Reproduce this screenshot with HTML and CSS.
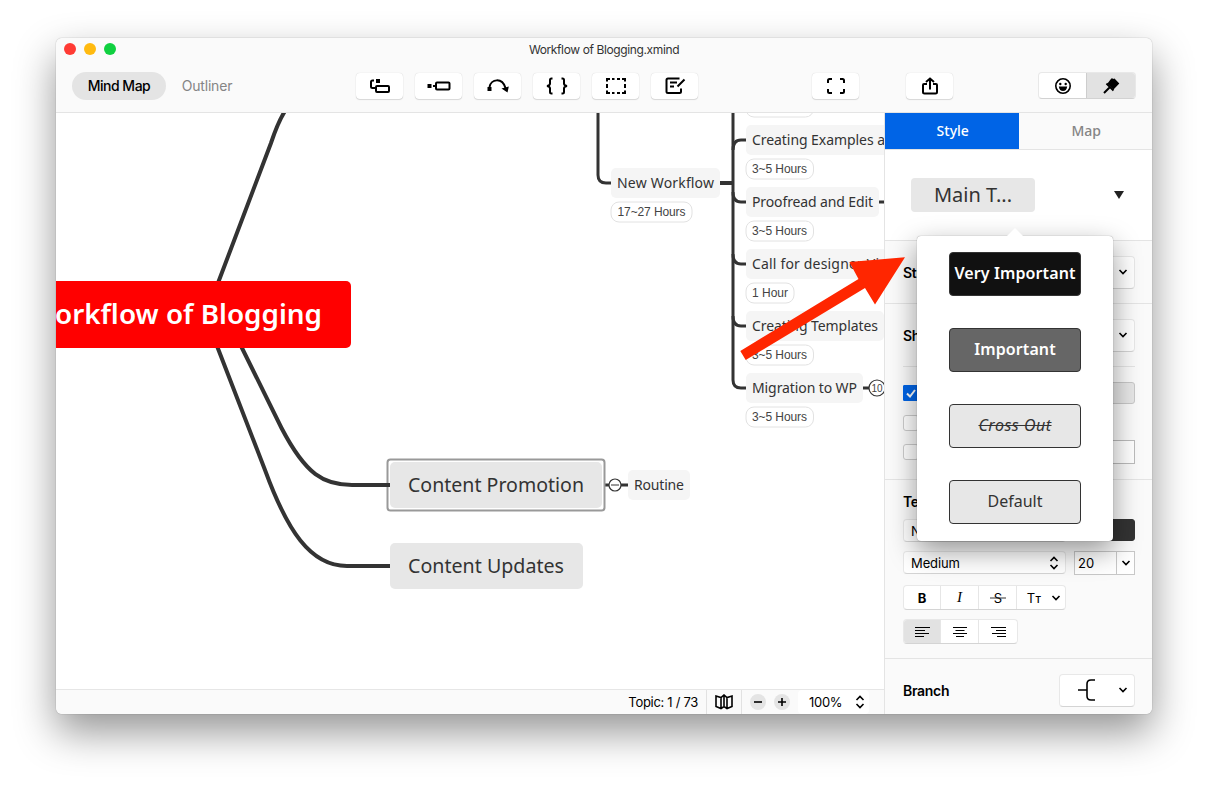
FILE: index.html
```html
<!DOCTYPE html>
<html lang="en">
<head>
    <meta charset="UTF-8">
    <meta name="viewport" content="width=device-width, initial-scale=1.0">
    <title>Workflow of Blogging.xmind</title>
    <link rel="stylesheet" href="styles.css">
</head>
<body>
    <div class="window">
        <header class="header">
            <div class="titlebar">
                <div class="lights">
                    <span class="light red"></span>
                    <span class="light yellow"></span>
                    <span class="light green"></span>
                </div>
                <span class="title">Workflow of Blogging.xmind</span>
            </div>
            <div class="toolbar">
                <div class="views">
                    <button class="view active">Mind Map</button>
                    <button class="view">Outliner</button>
                </div>
                <div class="tools">
                    <button class="tool"><svg width="22" height="18" viewBox="0 0 22 18"><rect x="7" y="2" width="4" height="4" fill="#000"/><path class="ln" d="M5 3.500H3.500Q2 3.500 2 5V9.500Q2 11 3.500 11H6"/><rect class="ln" x="7" y="9" width="13" height="6" rx="1"/></svg></button>
                    <button class="tool"><svg width="24" height="18" viewBox="0 0 24 18"><path d="M.5 7h4v4h-4zM6 8h3v2H6z"/><rect class="ln" x="9" y="5.500" width="13.500" height="7" rx="1"/></svg></button>
                    <button class="tool"><svg width="22" height="18" viewBox="0 0 22 18"><path d="M.5 10h4v4h-4zM14.500 11.500l7.300-2L20.500 15.500z"/><path class="ln" d="M2.500 10C4 2 15 0 18.500 11"/></svg></button>
                    <button class="tool"><svg width="22" height="18" viewBox="0 0 22 18"><path class="ln" d="M6.500 1.500H5.500Q4 1.500 4 3V6.500Q4 8.500 1 9Q4 9.500 4 11.500V15Q4 16.500 5.500 16.500H6.500M15.500 1.500H16.500Q18 1.500 18 3V6.500Q18 8.500 21 9Q18 9.500 18 11.500V15Q18 16.500 16.500 16.500H15.500"/></svg></button>
                    <button class="tool"><svg width="22" height="18" viewBox="0 0 22 18"><path class="ln" d="M2 4.500V2H5M17 2H20V4.500M20 13.500V16H17M5 16H2V13.500M7 2H9.500M12 2H15M7 16H9.500M12 16H15M2 7V11M20 7V11"/></svg></button>
                    <button class="tool"><svg width="22" height="18" viewBox="0 0 22 18"><path class="ln" d="M15.500 1.500H4Q2.500 1.500 2.500 3V14.500Q2.500 16 4 16H15.500Q17 16 17 14.500V11.500M6 5.500H13M6 9.500H10M20.500 2.500L13.500 9.500"/></svg></button>
                </div>
                <button class="tool zen"><svg width="20" height="18" viewBox="0 0 20 18"><path class="ln" d="M2 6V3.500Q2 2 3.500 2H6M14 2H16.500Q18 2 18 3.500V6M18 12V14.500Q18 16 16.500 16H14M6 16H3.500Q2 16 2 14.500V12"/></svg></button>
                <button class="tool share"><svg width="18" height="18" viewBox="0 0 18 18"><path class="ln" d="M6 7H3Q2 7 2 8V15Q2 16.500 3.500 16.500H14.500Q16 16.500 16 15V8Q16 7 15 7H12M9 12.500V2M5 5L9 1.500L13 5"/></svg></button>
                <div class="panels">
                    <button class="panel"><svg width="18" height="18" viewBox="0 0 18 18"><circle class="ln thin" cx="9" cy="9" r="7.200"/><circle cx="6.300" cy="7" r="1.200"/><circle cx="11.700" cy="7" r="1.200"/><path d="M4.800 9.500H13.200Q12.500 14 9 14Q5.500 14 4.800 9.500z"/></svg></button>
                    <button class="panel active"><svg width="18" height="18" viewBox="0 0 18 18"><path d="M8.500 2.500L10 1 11 2 12.500 1.500 17.300 6.500 11.500 12.500 5.500 6.500z"/><path class="ln" d="M4.500 6.500L11.500 13.500M8 10L2 16"/></svg></button>
                </div>
            </div>
        </header>

        <div class="content">
            <main class="workspace">
                <!-- mind map canvas -->
                <svg class="map" width="828" height="576" viewBox="56 113 828 576">
                    <g class="branch">
                        <path d="M218 283L271 143Q278 122 285 111"/>
                        <path d="M217 346L265 470C287 530 310 566 347 566H391"/>
                        <path d="M241 346L281.500 428C306 475 324 485 352 485H391"/>
                        <path d="M720 183H733"/>
                    </g>
                    <g class="twig">
                        <path d="M598 113V175Q598 183 606 183H612"/>
                        <path d="M733 113V380Q733 388 741 388H747"/>
                        <path d="M733 150Q733 140 741 140H747M733 192Q733 202 741 202H747M733 254Q733 264 741 264H747M733 316Q733 326 741 326H747"/>
                        <path d="M879 202H884M863 388H869M603 485H609M621 485H629"/>
                    </g>

                    <rect class="root" x="20" y="281" width="331" height="67" rx="5"/>
                    <text class="root-text" x="322" y="324" text-anchor="end" textLength="293" lengthAdjust="spacingAndGlyphs">Workflow of Blogging</text>

                    <rect class="selection" x="387.500" y="459.500" width="217" height="51" rx="3"/>
                    <path class="stub" d="M386 485H391"/>
                    <rect class="main" x="390" y="462" width="212" height="46" rx="5"/>
                    <text class="main-text" x="408" y="492" textLength="176" lengthAdjust="spacingAndGlyphs">Content Promotion</text>
                    <rect class="main" x="390" y="543" width="193" height="46" rx="5"/>
                    <text class="main-text" x="408" y="573" textLength="156" lengthAdjust="spacingAndGlyphs">Content Updates</text>

                    <circle class="fold" cx="615" cy="485" r="6"/>
                    <path class="minus" d="M611 485H619"/>

                    <g class="sub">
                        <rect x="628" y="470" width="62" height="30" rx="5"/>
                        <rect x="611" y="168" width="109" height="30" rx="5"/>
                        <rect x="746" y="125" width="150" height="30" rx="5"/>
                        <rect x="746" y="187" width="133" height="30" rx="5"/>
                        <rect x="746" y="249" width="150" height="30" rx="5"/>
                        <rect x="746" y="311" width="138" height="30" rx="5"/>
                        <rect x="746" y="373" width="117" height="30" rx="5"/>
                    </g>
                    <g class="sub-text">
                        <text x="634" y="490" textLength="50">Routine</text>
                        <text x="617" y="188" textLength="97">New Workflow</text>
                        <text x="752" y="145" textLength="133">Creating Examples a</text>
                        <text x="752" y="207" textLength="121">Proofread and Edit</text>
                        <text x="752" y="269" textLength="127">Call for designer Vi</text>
                        <text x="752" y="331" textLength="126">Creating Templates</text>
                        <text x="752" y="393" textLength="105">Migration to WP</text>
                    </g>

                    <g class="label">
                        <rect x="746" y="97.500" width="67.500" height="19.500" rx="8"/>
                        <rect x="611" y="202" width="81" height="20" rx="8"/>
                        <rect x="746" y="159" width="67.500" height="20" rx="8"/>
                        <rect x="746" y="221" width="67.500" height="20" rx="8"/>
                        <rect x="746" y="283" width="48" height="20" rx="8"/>
                        <rect x="746" y="345" width="67.500" height="20" rx="8"/>
                        <rect x="746" y="407" width="67.500" height="20" rx="8"/>
                    </g>
                    <g class="label-text">
                        <text x="617.500" y="216" textLength="68">17~27 Hours</text>
                        <text x="752" y="173" textLength="55">3~5 Hours</text>
                        <text x="752" y="235" textLength="55">3~5 Hours</text>
                        <text x="752" y="297" textLength="36">1 Hour</text>
                        <text x="752" y="359" textLength="55">3~5 Hours</text>
                        <text x="752" y="421" textLength="55">3~5 Hours</text>
                    </g>
                    <circle class="fold" cx="877" cy="388" r="8"/>
                    <text class="count" x="877" y="392" text-anchor="middle">10</text>
                </svg>

                <footer class="statusbar">
                    <span class="topic">Topic: 1 / 73</span>
                    <span class="overview"><svg width="18" height="16" viewBox="0 0 18 16"><path class="ln thin" d="M1 2L6 3.500 9 1 12 3.500 17 2V12.500L12 14.500 9 12.500 6 14.500 1 12.500zM6 3.500V14.500M9 1.500V12.500M12 3.500V14.500"/></svg></span>
                    <button class="zoom"><svg width="8" height="8" viewBox="0 0 8 8"><path class="ln thin" d="M0 4H8"/></svg></button>
                    <button class="zoom"><svg width="8" height="8" viewBox="0 0 8 8"><path class="ln thin" d="M0 4H8M4 0V8"/></svg></button>
                    <div class="percent">100% <svg width="10" height="14" viewBox="0 0 10 14"><path class="ln thin" d="M1.500 5L5 1.500 8.500 5M1.500 9L5 12.500 8.500 9"/></svg></div>
                </footer>
            </main>

            <aside class="sidebar">
                <div class="tabs">
                    <button class="tab active">Style</button>
                    <button class="tab">Map</button>
                </div>
                <section class="preset">
                    <div class="preset-name">Main T...</div>
                    <span class="triangle"></span>
                    <div class="popover">
                        <div class="option very">Very Important</div>
                        <div class="option important">Important</div>
                        <div class="option cross">Cross Out</div>
                        <div class="option">Default</div>
                    </div>
                </section>
                <section class="row structure">
                    <b>Structure</b>
                    <button class="picker"><svg width="10" height="6" viewBox="0 0 10 6"><path class="ln thin" d="M1.500 1L5 4.500 8.500 1"/></svg></button>
                </section>
                <section class="shape">
                    <div class="row shape-row">
                        <b>Shape</b>
                        <button class="picker"><svg width="10" height="6" viewBox="0 0 10 6"><path class="ln thin" d="M1.500 1L5 4.500 8.500 1"/></svg></button>
                    </div>
                    <div class="check-row">
                        <span class="check on"><svg width="10" height="9" viewBox="0 0 10 9"><path d="M1 4.500L4 7.500 9 1"/></svg></span>
                        <span class="swatch"></span>
                    </div>
                    <div class="check-row"><span class="check"></span></div>
                    <div class="check-row">
                        <span class="check"></span>
                        <span class="field"></span>
                    </div>
                </section>
                <section class="text">
                    <b>Text</b>
                    <div class="line">
                        <div class="select font">Nunito</div>
                        <span class="swatch dark"></span>
                    </div>
                    <div class="line">
                        <div class="select">Medium <svg width="10" height="14" viewBox="0 0 10 14"><path class="ln thin" d="M1.500 5L5 1.500 8.500 5M1.500 9L5 12.500 8.500 9"/></svg></div>
                        <div class="size"><span>20</span><i><svg width="10" height="6" viewBox="0 0 10 6"><path class="ln thin" d="M1.500 1L5 4.500 8.500 1"/></svg></i></div>
                    </div>
                    <div class="group">
                        <button class="bold">B</button>
                        <button class="italic">I</button>
                        <button class="strike"><svg width="16" height="14" viewBox="0 0 16 14"><text x="8" y="11.500" text-anchor="middle">S</text><path d="M0 7H16"/></svg></button>
                        <button class="case"><span>T<small>T</small></span><svg width="10" height="6" viewBox="0 0 10 6"><path class="ln thin" d="M1.500 1L5 4.500 8.500 1"/></svg></button>
                    </div>
                    <div class="group">
                        <button class="active"><svg width="15" height="12" viewBox="0 0 15 12"><path class="bar" d="M0 1.500H15M0 4.500H10M0 7.500H14M0 10.500H9"/></svg></button>
                        <button><svg width="14" height="12" viewBox="0 0 14 12"><path class="bar" d="M0 1.500H14M2.500 4.500H11.500M0 7.500H14M3 10.500H11"/></svg></button>
                        <button><svg width="15" height="12" viewBox="0 0 15 12"><path class="bar" d="M0 1.500H15M5 4.500H15M1 7.500H15M6 10.500H15"/></svg></button>
                    </div>
                </section>
                <section class="row branch-row">
                    <b>Branch</b>
                    <button class="picker"><svg width="18" height="22" viewBox="0 0 18 22"><path class="ln thin" d="M0 11H9M17 1H13Q9 1 9 5V17Q9 21 13 21H17"/></svg><svg width="10" height="6" viewBox="0 0 10 6"><path class="ln thin" d="M1.500 1L5 4.500 8.500 1"/></svg></button>
                </section>
            </aside>
        </div>
    </div>

    <!-- red pointer lying over the window -->
    <svg class="arrow" width="170" height="110" viewBox="738 254 170 110">
        <path d="M740.300 351L858.500 279 849.300 262 905 257.300 875 304.500 865 288 745.700 360z"/>
    </svg>
</body>
</html>
```
FILE: styles.css
```css
* {
    box-sizing: border-box;
}

body {
    margin: 0;
    height: 788px;
    padding: 38px 56px;
    background: #fff;
    font-family: Inter, "Liberation Sans", sans-serif;
    font-size: 13px;
    color: #000;
    overflow: hidden;
}

button {
    border: none;
    padding: 0;
    background: none;
    font: inherit;
    display: flex;
    align-items: center;
    justify-content: center;
}

.ln {
    fill: none;
    stroke: #000;
    stroke-width: 2;
}

.thin {
    stroke-width: 1.6;
}

/* window */
.window {
    width: 1096px;
    height: 676px;
    border-radius: 6px;
    overflow: hidden;
    background: #fff;
    box-shadow: 0 0 1px rgba(0, 0, 0, 0.5), 0 18px 40px rgba(0, 0, 0, 0.42);
}

.header {
    height: 75px;
    background: #fafafa;
    border-bottom: 1px solid #e4e4e4;
}

.titlebar {
    height: 23px;
    display: flex;
    align-items: center;
    padding-left: 8px;
}

.lights {
    display: flex;
    gap: 8px;
    width: 52px;
    padding-bottom: 1px;
}

.light {
    width: 12px;
    height: 12px;
    border-radius: 50%;
}

.red {
    background: #ff3b34;
}

.yellow {
    background: #ffba10;
}

.green {
    background: #10d040;
}

.title {
    flex: 1;
    padding-right: 60px;
    text-align: center;
    font-size: 12px;
    letter-spacing: -0.38px;
    color: #333;
}

.toolbar {
    height: 49px;
    display: flex;
    align-items: center;
    padding: 0 16px;
}

.views {
    display: flex;
    width: 284px;
}

.view {
    height: 28px;
    width: 94px;
    border-radius: 14px;
    font-size: 14px;
    letter-spacing: -0.2px;
    color: #858585;
}

.view.active {
    background: #e4e4e4;
    color: #000;
    font-weight: 500;
    letter-spacing: -0.5px;
}

.view:last-child {
    width: 82px;
}

.tools {
    display: flex;
    gap: 12px;
}

.tool {
    width: 47px;
    height: 26px;
    background: #fff;
    border-radius: 4px;
    box-shadow: 0 0 1px rgba(0, 0, 0, 0.2), 0 1px 1px rgba(0, 0, 0, 0.12);
}

.zen {
    margin-left: 114px;
}

.share {
    margin-left: 47px;
}

.panels {
    display: flex;
    margin-left: 85px;
    border-radius: 4px;
    overflow: hidden;
    background: #fff;
    border: 1px solid #e8e8e8;
    border-bottom-color: #d2d2d2;
}

.panel {
    width: 47px;
    height: 25px;
}

.panel.active {
    width: 49px;
    background: #e2e2e2;
    border-left: 1px solid #cdcdcd;
}

.content {
    display: flex;
    height: 601px;
}

/* map */
.workspace {
    width: 828px;
}

.map {
    display: block;
    font-family: "Noto Sans", sans-serif;
}

.branch path,
.twig path {
    fill: none;
    stroke: #333;
    stroke-width: 4;
}

.twig path {
    stroke-width: 3;
}

.root {
    fill: #f00;
}

.root-text {
    font-size: 27px;
    font-weight: 600;
    fill: #fff;
}

.main {
    fill: #e7e7e7;
}

.main-text {
    font-size: 20px;
    font-weight: 450;
    fill: #333;
}

.selection {
    fill: #fff;
    stroke: #999;
    stroke-width: 2;
}

.stub {
    stroke: #333;
    stroke-width: 4;
}

.fold {
    fill: #fff;
    stroke: #333;
    stroke-width: 1.2;
}

.minus {
    stroke: #333;
}

.sub {
    fill: #f5f5f5;
}

.sub-text {
    font-size: 14px;
    font-weight: 450;
    fill: #333;
}

.label {
    fill: #fff;
    stroke: #e2e2e2;
}

.label-text {
    font-family: "Liberation Sans", sans-serif;
    font-size: 12px;
    fill: #444;
}

.count {
    font-family: "Liberation Sans", sans-serif;
    font-size: 10px;
    fill: #444;
}

.statusbar {
    height: 25px;
    display: flex;
    align-items: center;
    justify-content: flex-end;
    padding-right: 15px;
    background: #fafafa;
    border-top: 1px solid #e6e6e6;
}

.topic {
    letter-spacing: -0.3px;
    padding-right: 8px;
}

.overview {
    display: flex;
    align-items: center;
    justify-content: center;
    width: 36px;
    height: 24px;
    border-left: 1px solid #e2e2e2;
    border-right: 1px solid #e2e2e2;
    margin-right: 8px;
}

.zoom {
    width: 16px;
    height: 16px;
    border-radius: 50%;
    background: #e4e4e4;
    margin-right: 8px;
}

.percent {
    width: 71px;
    height: 24px;
    display: flex;
    align-items: center;
    justify-content: space-between;
    padding: 0 4px 0 11px;
    background: #fff;
    border-radius: 4px;
    letter-spacing: -0.3px;
}

/* sidebar */
.sidebar {
    width: 268px;
    background: #fafafa;
    border-left: 1px solid #e4e4e4;
}

.tabs {
    display: flex;
    height: 37px;
    border-bottom: 1px solid #e4e4e4;
}

.tab {
    flex: 1;
    padding: 0 0 2px 2px;
    font-family: "Noto Sans", sans-serif;
    font-size: 14px;
    font-weight: 500;
    color: #858585;
}

.tab.active {
    background: #0064e6;
    color: #fff;
}

.preset {
    position: relative;
    height: 91px;
    display: flex;
    align-items: center;
    justify-content: space-between;
    padding: 0 28px 0 26px;
    background: #fff;
    border-bottom: 1px solid #e4e4e4;
}

.preset-name {
    width: 124px;
    height: 34px;
    line-height: 33px;
    text-align: center;
    border-radius: 4px;
    background: #e7e7e7;
    font-family: "Noto Sans", sans-serif;
    font-size: 20px;
    color: #333;
}

.triangle {
    border: 5px solid transparent;
    border-top: 8px solid #222;
    border-bottom: none;
}

.popover {
    position: absolute;
    left: 32px;
    top: 86px;
    width: 196px;
    height: 305px;
    display: flex;
    flex-direction: column;
    gap: 32px;
    padding: 16px 32px;
    border-radius: 4px;
    background: #fff;
    box-shadow: 0 0 1px rgba(0, 0, 0, 0.5), 0 10px 28px rgba(0, 0, 0, 0.4);
    font-family: "Noto Sans", sans-serif;
}

.popover::before {
    content: "";
    position: absolute;
    left: 90px;
    top: -8px;
    border: 8px solid transparent;
    border-top: none;
    border-bottom-color: #fff;
}

.option {
    height: 44px;
    line-height: 41px;
    text-align: center;
    border: 1px solid #333;
    border-radius: 4px;
    background: #e7e7e7;
    color: #333;
    font-size: 16px;
    white-space: nowrap;
}

.very,
.important {
    background: #111;
    color: #fff;
    font-weight: 600;
    letter-spacing: 0.1px;
}

.important {
    background: #666;
}

.cross {
    font-style: italic;
    text-decoration: line-through;
    letter-spacing: 0.5px;
}

b {
    font-weight: 600;
    font-size: 14px;
    letter-spacing: -0.3px;
}

.row {
    display: flex;
    align-items: center;
    justify-content: space-between;
    padding: 0 17px 0 18px;
}

.structure {
    height: 63px;
    border-bottom: 1px solid #e4e4e4;
}

.picker {
    width: 76px;
    height: 33px;
    justify-content: flex-end;
    gap: 22px;
    padding-right: 6px;
    background: #fff;
    border: 1px solid #e8e8e8;
    border-bottom-color: #d4d4d4;
    border-radius: 4px;
}

.shape {
    height: 176px;
    padding: 0 17px 0 18px;
    border-bottom: 1px solid #e4e4e4;
}

.shape-row {
    height: 63px;
    padding: 0;
    border-bottom: 1px solid #e4e4e4;
    margin-bottom: 11px;
}

.check-row {
    height: 30px;
    display: flex;
    align-items: center;
    justify-content: space-between;
}

.check-row:last-child {
    height: 28px;
}

.check {
    width: 16px;
    height: 16px;
    border: 1px solid #ccc;
    border-radius: 3px;
    background: #fff;
}

.check.on {
    display: flex;
    align-items: center;
    justify-content: center;
    background: #0064e6;
    border-color: #0064e6;
    border-radius: 1px;
}

.check path {
    fill: none;
    stroke: #fff;
    stroke-width: 2;
}

.swatch {
    width: 60px;
    height: 22px;
    border-radius: 3px;
    background: #e7e7e7;
    border: 1px solid #c8c8c8;
}

.field {
    width: 60px;
    height: 24px;
    background: #fff;
    border: 1px solid #bbb;
}

.dark {
    background: #333;
    border-color: #333;
}

.text {
    height: 179px;
    padding: 12px 17px 0 18px;
    border-bottom: 1px solid #e4e4e4;
}

.text b {
    display: block;
    height: 27px;
    line-height: 20px;
}

.line {
    display: flex;
    justify-content: space-between;
    height: 23px;
    margin-bottom: 9px;
}

.select {
    width: 163px;
    height: 23px;
    display: flex;
    align-items: center;
    justify-content: space-between;
    padding: 0 6px 0 7px;
    background: #fff;
    border: 1px solid #e8e8e8;
    border-bottom-color: #d4d4d4;
    border-radius: 4px;
    letter-spacing: -0.1px;
}

.size {
    width: 61px;
    height: 24px;
    display: flex;
    align-items: center;
    background: #fff;
    border: 1px solid #c8c8c8;
}

.size span {
    flex: 1;
    padding-left: 3px;
}

.size i {
    width: 18px;
    height: 22px;
    display: flex;
    align-items: center;
    justify-content: center;
    border-left: 1px solid #c8c8c8;
}

.group {
    display: flex;
    width: max-content;
    height: 25px;
    margin-bottom: 9px;
    background: #fff;
    border: 1px solid #e8e8e8;
    border-bottom-color: #d4d4d4;
    border-radius: 4px;
    overflow: hidden;
}

.line + .group {
    margin-top: 11px;
}

.group button {
    width: 38px;
    border-right: 1px solid #e6e6e6;
}

.group button:first-child {
    width: 37px;
}

.group button:last-child {
    border-right: none;
}

.group .active {
    background: #e2e2e2;
}

.group .case {
    width: 48px;
    gap: 10px;
    padding-left: 6px;
}

.case small {
    font-size: 9px;
    font-weight: 600;
}

.bold {
    font-weight: 700;
}

.italic {
    font-family: "Liberation Serif", serif;
    font-style: italic;
    font-size: 15px;
}

.strike path {
    stroke: #333;
    stroke-width: 1;
}

.bar {
    stroke: #000;
    stroke-width: 1.2;
}

.branch-row {
    height: 62px;
}

/* pointer */
.arrow {
    position: absolute;
    left: 738px;
    top: 254px;
    fill: #ff2600;
}
```
